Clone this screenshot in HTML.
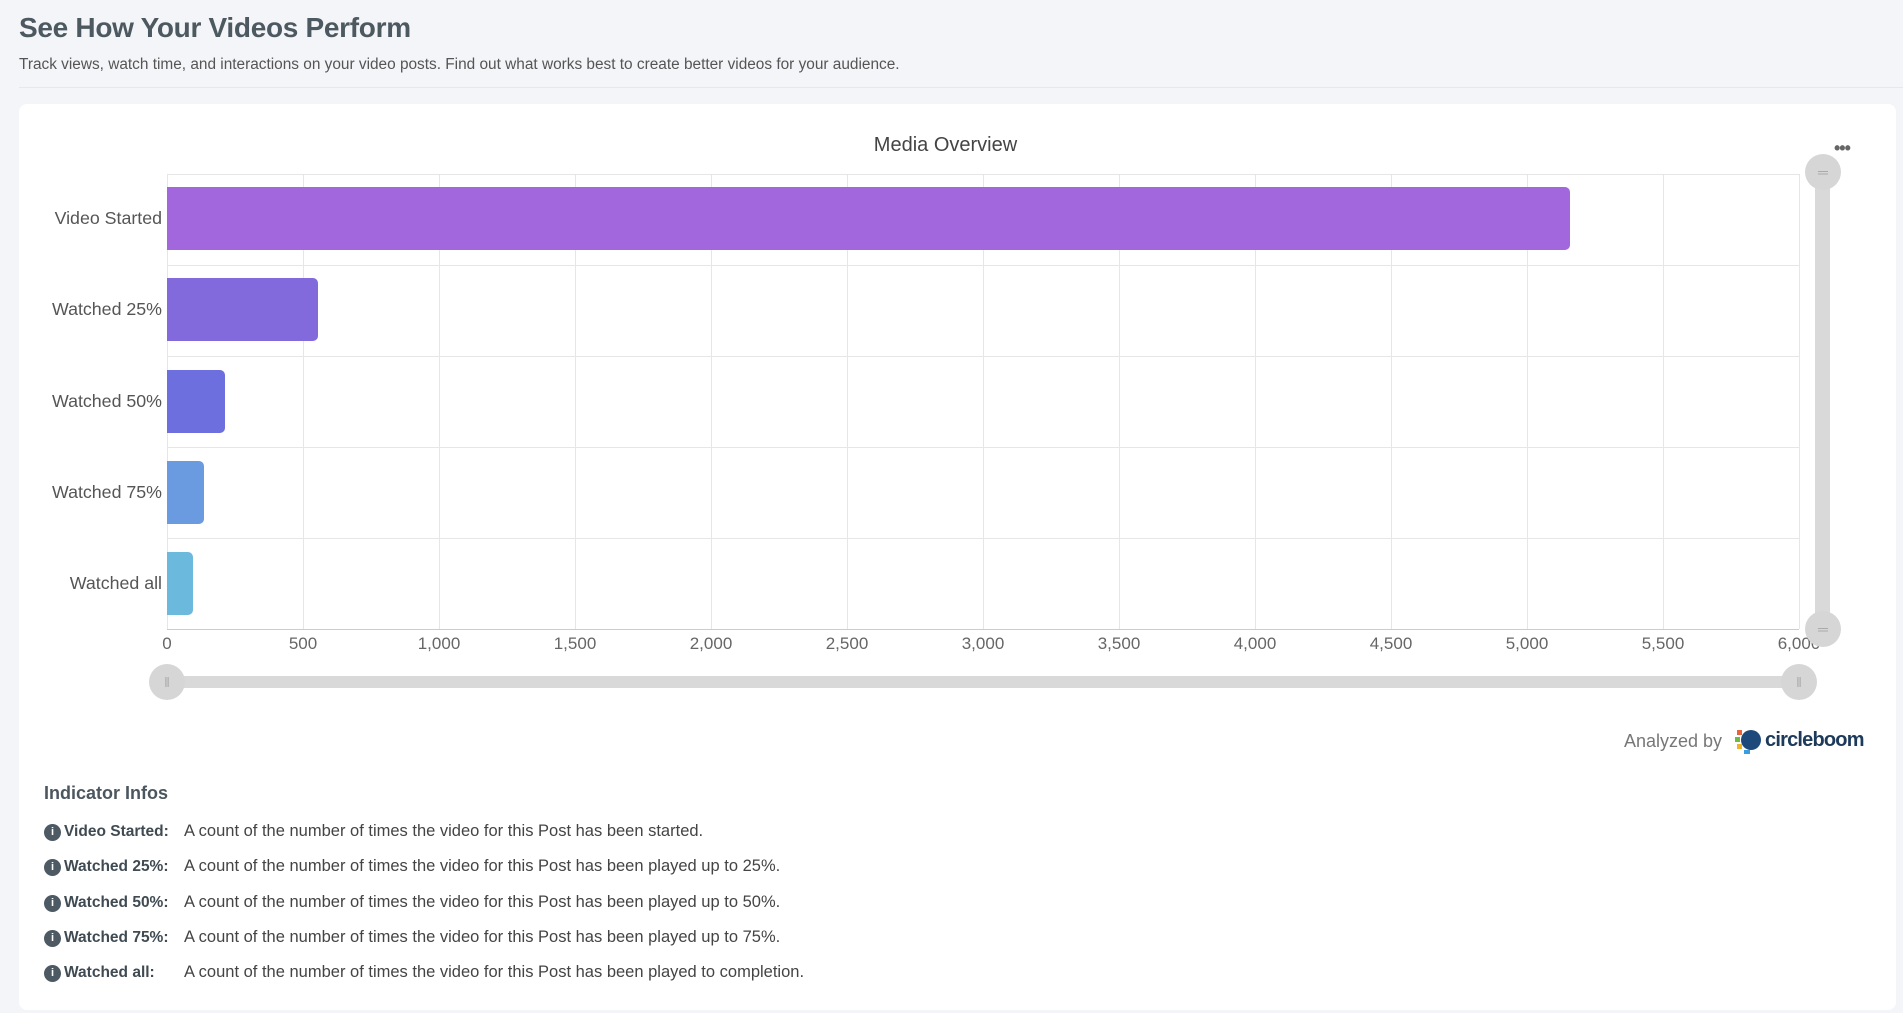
<!DOCTYPE html>
<html><head><meta charset="utf-8"><style>
*{margin:0;padding:0;box-sizing:border-box}
body{width:1903px;height:1013px;background:#f4f5f8;font-family:"Liberation Sans",sans-serif;color:#4b565e;position:relative;overflow:hidden}
.a{position:absolute}
h1{position:absolute;left:19px;top:12px;font-size:28px;font-weight:bold;color:#4d5961;letter-spacing:-0.3px}
.sub{left:19px;top:56px;font-size:15.4px;color:#555}
.sep{left:19px;right:0;top:87px;height:1px;background:#e6e8ec}
.card{left:19px;top:104px;width:1877px;height:906px;background:#fff;border-radius:8px}
.vg{position:absolute;top:174px;height:455px;width:1px;background:#e6e6e6}
.hg{position:absolute;left:167px;width:1632px;height:1px;background:#e6e6e6}
.bar{position:absolute;left:167px;height:63px;border-radius:0 5px 5px 0}
.lab{position:absolute;right:1741px;font-size:17.8px;color:#555;text-align:right;white-space:nowrap}
.xl{position:absolute;top:634px;font-size:17px;color:#666;transform:translateX(-50%)}
.h{position:absolute;width:36px;height:36px;border-radius:50%;background:#d6d6d6;display:flex;align-items:center;justify-content:center;color:#aaa;font-size:14px}
.row{position:absolute;left:44px;font-size:16.5px;color:#444;white-space:nowrap}
.row i{display:inline-block;width:17px;height:17px;border-radius:50%;background:#4d5a63;color:#fff;font-style:normal;font-size:11px;font-weight:bold;text-align:center;line-height:17px;vertical-align:1px;margin-right:3px}
.row b{display:inline-block;width:120px;color:#3f4a52;font-size:15.5px}
</style></head><body>
<h1>See How Your Videos Perform</h1>
<div class="a sub">Track views, watch time, and interactions on your video posts. Find out what works best to create better videos for your audience.</div>
<div class="a sep"></div>
<div class="a card"></div>
<div class="a" style="left:0;width:1891px;top:134px;text-align:center;font-size:20px;color:#444">Media Overview</div>
<div class="a" style="left:1834px;top:138px;font-size:18px;color:#666;letter-spacing:-1px;font-weight:bold">•••</div>

<div class="hg" style="top:174px"></div><div class="hg" style="top:265px"></div><div class="hg" style="top:356px"></div><div class="hg" style="top:447px"></div><div class="hg" style="top:538px"></div><div class="hg" style="top:629px;background:#ccc"></div>
<div class="vg" style="left:167px"></div><div class="vg" style="left:303px"></div><div class="vg" style="left:439px"></div><div class="vg" style="left:575px"></div><div class="vg" style="left:711px"></div><div class="vg" style="left:847px"></div><div class="vg" style="left:983px"></div><div class="vg" style="left:1119px"></div><div class="vg" style="left:1255px"></div><div class="vg" style="left:1391px"></div><div class="vg" style="left:1527px"></div><div class="vg" style="left:1663px"></div><div class="vg" style="left:1799px"></div>

<div class="bar" style="top:187px;width:1403px;background:#a267dd"></div>
<div class="bar" style="top:278px;width:151px;background:#826adc"></div>
<div class="bar" style="top:370px;width:58px;background:#6c6fdd"></div>
<div class="bar" style="top:461px;width:37px;background:#6a9ae0"></div>
<div class="bar" style="top:552px;width:26px;background:#6cb9de"></div>

<div class="lab" style="top:208px">Video Started</div>
<div class="lab" style="top:299px">Watched 25%</div>
<div class="lab" style="top:391px">Watched 50%</div>
<div class="lab" style="top:482px">Watched 75%</div>
<div class="lab" style="top:573px">Watched all</div>

<div class="xl" style="left:167px">0</div><div class="xl" style="left:303px">500</div><div class="xl" style="left:439px">1,000</div><div class="xl" style="left:575px">1,500</div><div class="xl" style="left:711px">2,000</div><div class="xl" style="left:847px">2,500</div><div class="xl" style="left:983px">3,000</div><div class="xl" style="left:1119px">3,500</div><div class="xl" style="left:1255px">4,000</div><div class="xl" style="left:1391px">4,500</div><div class="xl" style="left:1527px">5,000</div><div class="xl" style="left:1663px">5,500</div><div class="xl" style="left:1799px">6,000</div>

<div class="a" style="left:1815px;top:172px;width:15px;height:457px;background:#d9d9d9"></div>
<div class="h" style="left:1805px;top:154px">═</div>
<div class="h" style="left:1805px;top:611px">═</div>
<div class="a" style="left:167px;top:676px;width:1632px;height:12px;background:#d9d9d9"></div>
<div class="h" style="left:149px;top:664px">‖</div>
<div class="h" style="left:1781px;top:664px">‖</div>

<div class="a" style="left:1624px;top:731px;font-size:18px;color:#777">Analyzed by</div>
<svg class="a" style="left:1733px;top:724px" width="32" height="32" viewBox="0 0 32 32"><circle cx="18" cy="16" r="10" fill="#1d4a7a"/><rect x="4" y="6" width="5" height="5" fill="#e8633a"/><rect x="2" y="13" width="5" height="5" fill="#6cbb45"/><rect x="4" y="20" width="5" height="5" fill="#f0b429"/><rect x="11" y="26" width="6" height="4" fill="#3a9de0"/></svg>
<div class="a" style="left:1765px;top:729px;font-size:20px;font-weight:bold;color:#1d3a5a;letter-spacing:-0.8px">circleboom</div>

<div class="a" style="left:44px;top:783px;font-size:18px;font-weight:bold;color:#4b565e">Indicator Infos</div>
<div class="row" style="top:822px"><i>i</i><b>Video Started:</b>A count of the number of times the video for this Post has been started.</div>
<div class="row" style="top:857px"><i>i</i><b>Watched 25%:</b>A count of the number of times the video for this Post has been played up to 25%.</div>
<div class="row" style="top:893px"><i>i</i><b>Watched 50%:</b>A count of the number of times the video for this Post has been played up to 50%.</div>
<div class="row" style="top:928px"><i>i</i><b>Watched 75%:</b>A count of the number of times the video for this Post has been played up to 75%.</div>
<div class="row" style="top:963px"><i>i</i><b>Watched all:</b>A count of the number of times the video for this Post has been played to completion.</div>
</body></html>
